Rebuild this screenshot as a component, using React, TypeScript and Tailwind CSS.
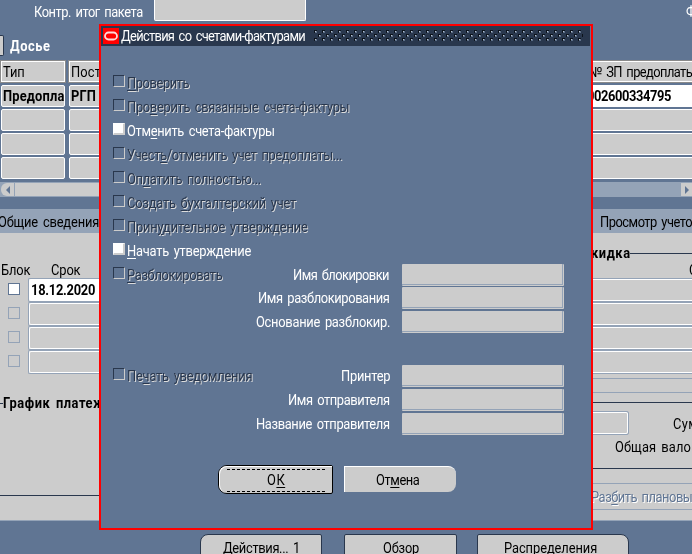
import { useLayoutEffect, useRef, type ReactNode } from "react";

const NARROW = 0.92;

/** One line of narrowed text whose tracking is adjusted so that it fills its box. */
function Fit({ className = "", children }: { className?: string; children: ReactNode }) {
  const outer = useRef<HTMLSpanElement>(null);
  const inner = useRef<HTMLSpanElement>(null);
  useLayoutEffect(() => {
    const box = outer.current;
    const text = inner.current;
    if (!box || !text) return;
    text.style.letterSpacing = "0px";
    const n = (text.textContent ?? "").length;
    const diff = box.clientWidth / NARROW - text.offsetWidth;
    if (n > 1) text.style.letterSpacing = `${diff / (n - 1)}px`;
  }, []);
  return (
    <span ref={outer} className={`block shrink-0 leading-4 whitespace-nowrap ${className}`}>
      <span ref={inner} className="inline-block origin-left scale-x-92 [word-spacing:2px]">
        {children}
      </span>
    </span>
  );
}

function Key({ children }: { children: string }) {
  return <span className="underline decoration-1 underline-offset-2">{children}</span>;
}

function DialogCheck({ on = false, width, children }: { on?: boolean; width: string; children: ReactNode }) {
  return (
    <div className="flex h-6 items-start gap-[2px]">
      <span
        className={
          on
            ? "h-3 w-3 shrink-0 border-r-2 border-b-2 border-t border-l border-[#cccccc] border-t-white border-l-white bg-white"
            : "h-3 w-3 shrink-0 border border-[#29374d] border-r-[#cccccc] border-b-[#cccccc]"
        }
      />
      <Fit
        className={`${width} ${on ? "text-white" : "text-[#29374d] [text-shadow:1px_1px_0_#dcdcdc]"}`}
      >
        {children}
      </Fit>
    </div>
  );
}

function DialogField({ width, children }: { width: string; children: ReactNode }) {
  return (
    <div className="flex h-[22px] items-center justify-end gap-3 text-white">
      <Fit className={width}>{children}</Fit>
      <span className="flex h-[22px] w-[162px] shrink-0 rounded-[1px] bg-[#cccccc] pr-px pb-px">
        <span className="flex-1 border-r border-b border-[#94a3b7]" />
      </span>
    </div>
  );
}

function Cell({ className = "", children }: { className?: string; children?: ReactNode }) {
  return (
    <div
      className={`flex h-[22px] shrink-0 items-center overflow-hidden rounded-[2px] border border-white bg-[#cccccc] font-bold ${className}`}
    >
      {children}
    </div>
  );
}

function HeadCell({ className = "", children }: { className?: string; children?: ReactNode }) {
  return (
    <div className={`h-[23px] shrink-0 overflow-hidden border border-[#8a8a8a] bg-[#cccccc] ${className}`}>
      <div className="flex h-full items-center border border-white">{children}</div>
    </div>
  );
}

function TermRow({ active = false, date }: { active?: boolean; date?: string }) {
  return (
    <div className="flex h-6 shrink-0 pl-2">
      <span
        className={`mt-[5px] h-3 w-3 shrink-0 border ${
          active ? "border-[#607593] bg-white" : "border-[#94a3b7]"
        }`}
      />
      <div className="ml-2 flex h-6 flex-1 rounded-l-[2px] border border-r-0 border-[#94a3b7]">
        <div
          className={`flex flex-1 items-center rounded-l-[2px] border border-r-0 border-white pl-px font-bold ${
            active ? "bg-white" : "bg-[#cccccc]"
          }`}
        >
          {date && <Fit className="w-[64px]">{date}</Fit>}
        </div>
      </div>
    </div>
  );
}

function TitleDots() {
  return (
    <svg className="ml-2 h-3 w-[269px] shrink-0" shapeRendering="crispEdges">
      <defs>
        <pattern id="dots" width="8" height="12" patternUnits="userSpaceOnUse">
          {[
            [0, 0],
            [4, 4],
            [0, 8],
          ].map(([x, y]) => (
            <g key={`${x}-${y}`}>
              <rect x={x} y={y} width="3" height="3" fill="#0c121b" />
              <rect x={x + 1} y={y + 1} width="2" height="2" fill="#60718a" />
              <rect x={x + 1} y={y + 1} width="1" height="1" fill="#b9c4d2" />
            </g>
          ))}
        </pattern>
      </defs>
      <rect width="269" height="12" fill="url(#dots)" />
    </svg>
  );
}

function ActionsDialog() {
  return (
    <div className="absolute top-6 left-[99px] flex h-[506px] w-[494px] flex-col border-2 border-[#ff0000] bg-[#607593]">
      <div className="mr-px flex h-5 shrink-0 items-center bg-[#29374d] pl-[2px] text-white">
        <svg className="h-4 w-4 shrink-0 bg-[#ff0000]" viewBox="0 0 16 16">
          <rect x="2" y="4.5" width="12" height="7" rx="3.5" fill="none" stroke="#ffd9d9" strokeWidth="1.8" />
        </svg>
        <Fit className="ml-[2px] w-[185px]">Действия со счетами-фактурами</Fit>
        <TitleDots />
      </div>

      <div className="flex pt-[29px] pl-3">
        <div className="w-[143px] shrink-0">
          <DialogCheck width="w-[63px]"><Key>П</Key>роверить</DialogCheck>
          <DialogCheck width="w-[223px]">Про<Key>в</Key>ерить связанные счета-фактуры</DialogCheck>
          <DialogCheck on width="w-[148px]">Отм<Key>е</Key>нить счета-фактуры</DialogCheck>
          <DialogCheck width="w-[215px]">Учест<Key>ь</Key>/отменить учет предоплаты...</DialogCheck>
          <DialogCheck width="w-[134px]">Оп<Key>л</Key>атить полностью...</DialogCheck>
          <DialogCheck width="w-[169px]">Создать <Key>б</Key>ухгалтерский учет</DialogCheck>
          <DialogCheck width="w-[181px]">Прин<Key>у</Key>дительное утверждение</DialogCheck>
          <DialogCheck on width="w-[124px]"><Key>Н</Key>ачать утверждение</DialogCheck>
          <DialogCheck width="w-[96px]"><Key>Р</Key>азблокировать</DialogCheck>
          <div className="mt-[77px]">
            <DialogCheck width="w-[126px]">Пе<Key>ч</Key>ать уведомления</DialogCheck>
          </div>
        </div>
        <div className="flex w-[308px] shrink-0 flex-col pt-[189px]">
          <DialogField width="w-[97px]">Имя блокировки</DialogField>
          <div className="mt-px flex flex-col gap-[2px]">
            <DialogField width="w-[132px]">Имя разблокирования</DialogField>
            <DialogField width="w-[134px]">Основание разблокир.</DialogField>
          </div>
          <div className="mt-8 flex flex-col gap-[2px]">
            <DialogField width="w-[49px]">Принтер</DialogField>
            <DialogField width="w-[102px]">Имя отправителя</DialogField>
            <DialogField width="w-[134px]">Название отправителя</DialogField>
          </div>
        </div>
      </div>

      <div className="mt-[30px] flex items-start gap-[11px] pl-[117px]">
        <button className="flex h-[29px] w-[115px] rounded-l-[9px] rounded-r-[2px] border border-black bg-[#cccccc]">
          <span className="flex h-[27px] flex-1 items-center justify-center rounded-l-lg border-t border-l border-white px-1">
            <span className="mx-[3px] flex h-[23px] flex-1 items-center justify-center border-y border-dashed border-black">
              <Fit className="w-[18px]">О<Key>К</Key></Fit>
            </span>
          </span>
        </button>
        <button className="mt-px flex h-[26px] w-28 items-center justify-center rounded-r-lg border-t border-l border-white bg-[#cccccc]">
          <Fit className="-ml-[5px] w-[44px]">От<Key>м</Key>ена</Fit>
        </button>
      </div>
    </div>
  );
}

function BottomButton({ className, children }: { className: string; children: ReactNode }) {
  return (
    <button
      className={`flex h-7 shrink-0 items-center justify-center border border-[#29374d] bg-[#cccccc] ${className}`}
    >
      {children}
    </button>
  );
}

export default function App() {
  return (
    <div className="relative flex h-[554px] w-[692px] flex-col overflow-hidden bg-[#607593] font-['Roboto','Liberation_Sans',sans-serif] text-[14px] text-black">
      <div className="flex h-[35px] shrink-0 text-white">
        <Fit className="mt-1 ml-[34px] w-[109px]">Контр. итог пакета</Fit>
        <div className="ml-[11px] h-[21px] w-[152px] shrink-0 rounded-b-[2px] border border-t-0 border-white bg-[#cccccc]" />
        <Fit className="mt-[3px] ml-[380px] w-[30px]">Факт</Fit>
      </div>

      <div className="flex h-[25px] shrink-0 text-white">
        <div className="h-[21px] w-1 rounded-r-[2px] border border-l-0 border-[#29374d] bg-[#cccccc]" />
        <Fit className="mt-[3px] ml-[6px] w-[40px] font-bold">Досье</Fit>
      </div>

      <div className="flex h-[25px] shrink-0 gap-[2px]">
        <HeadCell className="w-[66px]"><Fit className="ml-px w-[22px]">Тип</Fit></HeadCell>
        <HeadCell className="w-[514px]"><Fit className="ml-px w-[70px]">Поставщик</Fit></HeadCell>
        <HeadCell className="w-[120px]"><Fit className="ml-[3px] w-[107px]">№ ЗП предоплаты</Fit></HeadCell>
      </div>

      <div className="flex h-[97px] shrink-0 flex-col gap-[2px] pl-px">
        {[0, 1, 2, 3].map((row) => (
          <div key={row} className="flex shrink-0 gap-1">
            <Cell className="w-16">{row === 0 && <Fit className="ml-px w-[75px]">Предоплата</Fit>}</Cell>
            <Cell className="w-[510px]">{row === 0 && <Fit className="ml-px w-[25px]">РГП</Fit>}</Cell>
            <Cell className={`w-[120px] ${row === 0 ? "bg-white!" : ""}`}>
              {row === 0 && <Fit className="ml-[3px] w-[84px]">002600334795</Fit>}
            </Cell>
          </div>
        ))}
      </div>

      <div className="flex h-[15px] shrink-0 items-center bg-[#94a3b7] pl-px">
        <span className="flex h-[13px] w-[13px] items-center justify-center rounded-l-md bg-[#cccccc]">
          <svg width="4" height="8" viewBox="0 0 4 8"><path d="M4 0v8L0 4z" fill="#607593" /></svg>
        </span>
        <span className="ml-px h-[13px] w-[400px] bg-[#cccccc]" />
        <span className="ml-auto flex h-[13px] w-[11px] items-center justify-center bg-[#cccccc]">
          <svg width="4" height="8" viewBox="0 0 4 8"><path d="M0 0v8l4-4z" fill="#607593" /></svg>
        </span>
      </div>

      <div className="mt-3 flex h-6 shrink-0 items-center bg-[#94a3b7] pt-px">
        <Fit className="-ml-[2px] w-[101px]">Общие сведения</Fit>
        <Fit className="ml-[501px] w-[99px]">Просмотр учетов</Fit>
      </div>

      <div className="flex h-[288px] shrink-0 border-b border-[#94a3b7] bg-[#cccccc]">
        <div className="flex w-[300px] shrink-0 flex-col overflow-hidden">
          <div className="flex h-[45px] shrink-0 items-end">
            <Fit className="ml-px w-[29px]">Блок</Fit>
            <Fit className="ml-[21px] w-[30px]">Срок</Fit>
          </div>
          <TermRow active date="18.12.2020" />
          <TermRow />
          <TermRow />
          <TermRow />
          <div className="mt-[21px] flex h-4 shrink-0 items-center">
            <span className="h-px w-[3px] bg-[#29374d]" />
            <Fit className="w-[116px] font-bold">График платежей</Fit>
          </div>
          <div className="mt-[84px] h-px shrink-0 bg-[#29374d]" />
        </div>

        <div className="ml-auto flex w-[110px] shrink-0 flex-col overflow-hidden">
          <div className="mt-3 flex h-4 shrink-0 items-center">
            <Fit className="w-[48px] font-bold">Скидка</Fit>
            <span className="h-px flex-1 bg-[#29374d]" />
          </div>
          <div className="flex h-[17px] shrink-0 items-end">
            <Fit className="ml-[107px] w-[40px]">Сумма</Fit>
          </div>
          {[0, 1, 2, 3].map((row) => (
            <div key={row} className="h-6 shrink-0 border-y border-[#94a3b7]">
              <div className="h-[22px] border-y border-white" />
            </div>
          ))}
          <div className="mt-1 h-[15px] shrink-0 border-y border-[#94a3b7]" />
          <div className="mt-[9px] h-px shrink-0 bg-[#29374d]" />
          <div className="mt-2 flex h-6 shrink-0">
            <div className="h-6 w-[47px] shrink-0 rounded-r-[2px] border border-[#94a3b7]">
              <div className="h-[22px] rounded-r-[2px] border border-white" />
            </div>
            <Fit className="mt-[5px] ml-11 w-[42px]">Сумма</Fit>
          </div>
          <Fit className="mt-1 ml-[33px] w-[98px]">Общая валовая</Fit>
          <div className="mt-[13px] h-px shrink-0 bg-[#29374d]" />
          <div className="mt-[14px] flex h-[27px] shrink-0 items-center border-y border-[#94a3b7] text-[#607593] [text-shadow:1px_1px_0_#fff]">
            <Fit className="ml-[9px] w-[109px]">Раз<Key>б</Key>ить плановый</Fit>
          </div>
        </div>
      </div>

      <div className="mt-[13px] flex shrink-0 pl-[200px]">
        <BottomButton className="w-[122px] rounded-l-lg rounded-r-[2px]">
          <Fit className="w-[77px]">Де<Key>й</Key>ствия... 1</Fit>
        </BottomButton>
        <BottomButton className="ml-[22px] w-[113px] rounded-[2px]">
          <Fit className="w-[36px]">Об<Key>з</Key>ор</Fit>
        </BottomButton>
        <BottomButton className="ml-5 w-[152px] rounded-l-[2px] rounded-r-lg">
          <Fit className="-ml-[6px] w-[93px]"><Key>Р</Key>аспределения</Fit>
        </BottomButton>
      </div>

      <ActionsDialog />
    </div>
  );
}
